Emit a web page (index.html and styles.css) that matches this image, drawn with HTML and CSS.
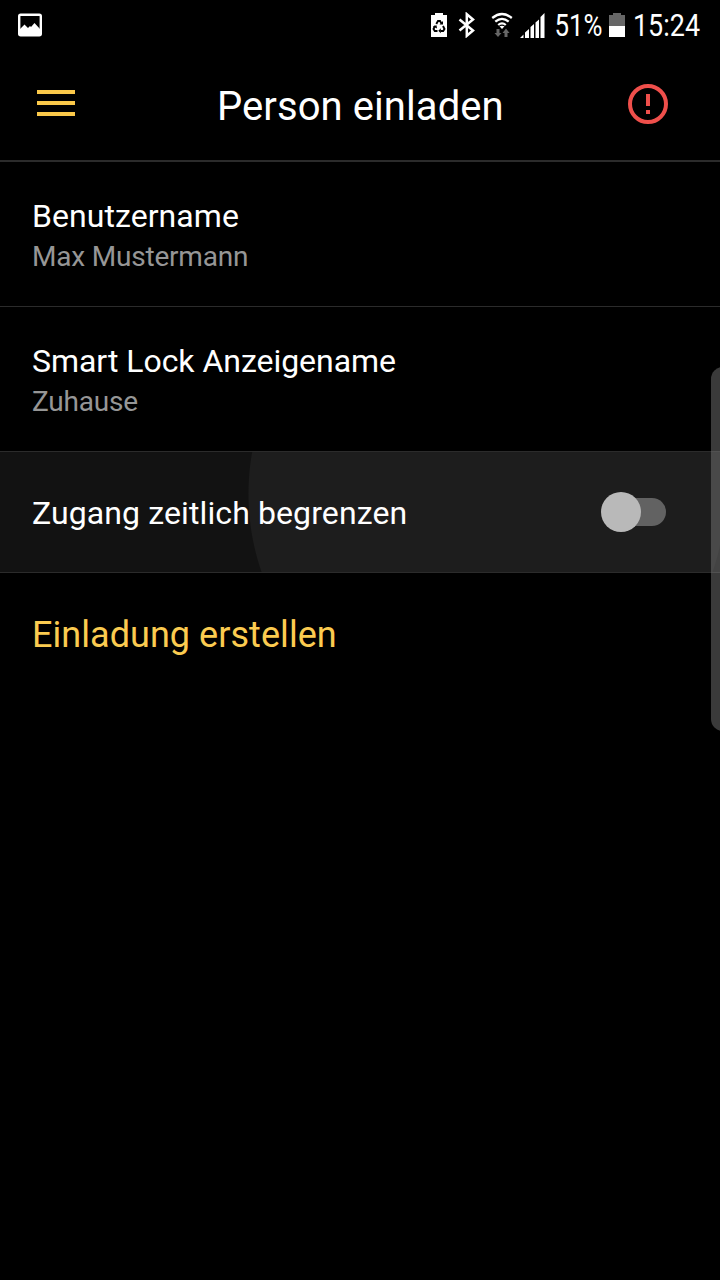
FILE: index.html
```html
<!DOCTYPE html>
<html lang="de">
<head>
    <meta charset="UTF-8">
    <meta name="viewport" content="width=device-width, initial-scale=1.0">
    <title>Person einladen</title>
    <link rel="stylesheet" href="styles.css">
</head>
<body>

    <div class="statusbar">
        <svg class="icon-picture" width="24" height="24" viewBox="0 0 24 24">
            <rect x="1.2" y="1.7" width="21.6" height="20.6" rx="1.5" fill="none" stroke="#fff" stroke-width="2.4"/>
            <path d="M2 16l4.500-4.500L10 15l2-2 1 1L16.500 10l5.500 6v6H2z" fill="#fff"/>
        </svg>
        <div class="status-right">
            <svg class="icon-saver" width="16" height="24" viewBox="0 0 16 24">
                <path d="M4 0h8v2h4v22H0V2h4z" fill="#fff"/>
                <path d="M5.300 11L7 8h2l1.500 2.500M12 13l1.500 3-1.300 2H9.500M6.500 18H3.800l-1.300-2L4 13" fill="none" stroke="#000" stroke-width="1.900"/>
                <path d="M8.500 11.500h3.500V8zM9.800 15.200v5L7.300 17.800zM1.800 13.300l3.700-1 .5 3.200z" fill="#000"/>
            </svg>
            <svg class="icon-bluetooth" width="17" height="26" viewBox="0 0 17 26">
                <path d="M1.500 7.500L15 18.500 8.800 23.800V2.200L15 7.500 1.500 18.500" fill="none" stroke="#fff" stroke-width="2.500"/>
            </svg>
            <svg class="icon-wifi" width="22" height="26" viewBox="0 0 22 26">
                <g fill="none" stroke="#fff" stroke-width="2.300">
                    <path d="M1.200 6Q11-2 20.800 6"/>
                    <path d="M4.300 9.700Q11 4 17.700 9.700"/>
                    <path d="M7.200 13Q11 9.700 14.800 13"/>
                </g>
                <path d="M8.500 14.300Q11 13 13.500 14.300L11 17z" fill="#fff"/>
                <path d="M5.500 17h3v4h2L7 25l-3.500-4h2z" fill="#666"/>
                <path d="M13.500 25h3v-4h2L15 16.500 11.500 21h2z" fill="#666"/>
            </svg>
            <svg class="icon-signal" width="25" height="25" viewBox="0 0 25 25">
                <path d="M0 25l3.500-3.500V25zM5 25v-5.500L9 16v9zM10.500 25V14l3.500-3v14zM15.500 25V9.500l3.500-3V25zM20.500 25V4l4-4v25z" fill="#fff"/>
            </svg>
            <svg class="status-text" width="47" height="30">
                <text x="-0.500" y="25" textLength="48" lengthAdjust="spacingAndGlyphs">51%</text>
            </svg>
            <svg class="icon-battery" width="16" height="24" viewBox="0 0 16 24">
                <path d="M4 0h8v2h4v11H0V2h4z" fill="#666"/>
                <path d="M0 13h16v11H0z" fill="#fff"/>
            </svg>
            <svg class="status-text" width="67" height="30">
                <text x="0" y="25" textLength="67" lengthAdjust="spacingAndGlyphs">15:24</text>
            </svg>
        </div>
    </div>

    <header class="header">
        <svg width="38" height="26" viewBox="0 0 38 26">
            <path d="M0 0h38v4H0zM0 11h38v4H0zM0 22h38v4H0z" fill="#fbc94a"/>
        </svg>
        <h1>Person einladen</h1>
        <svg width="40" height="40" viewBox="0 0 40 40">
            <circle cx="20" cy="20" r="18" fill="none" stroke="#ef4f4b" stroke-width="4"/>
            <path d="M18 10h4v12h-4zM18 26h4v4h-4z" fill="#ef4f4b"/>
        </svg>
    </header>

    <main>
        <div class="row">
            <div class="label label-user">Benutzername</div>
            <div class="value">Max Mustermann</div>
        </div>
        <div class="row">
            <div class="label label-lock">Smart Lock Anzeigename</div>
            <div class="value">Zuhause</div>
        </div>
        <div class="row row-switch">
            <div class="label label-limit">Zugang zeitlich begrenzen</div>
            <div class="switch"><span class="thumb"></span></div>
        </div>
        <a class="action">Einladung erstellen</a>
    </main>

    <div class="edge-handle"></div>

</body>
</html>
```

FILE: styles.css
```css
* {
    box-sizing: border-box;
}
body {
    position: relative;
    margin: 0;
    height: 1280px;
    overflow: hidden;
    background-color: #000;
    color: #fff;
    font-family: Roboto, sans-serif;
}
svg {
    display: block;
    flex-shrink: 0;
}
.statusbar {
    display: flex;
    justify-content: space-between;
    height: 50px;
    padding: 0 20px 0 18px;
}
.icon-picture {
    margin-top: 13px;
}
.status-right {
    display: flex;
    align-items: flex-start;
}
.icon-saver {
    margin: 13px 11px 0 0;
}
.icon-bluetooth {
    margin: 12px 16px 0 0;
}
.icon-wifi {
    margin: 12px 7px 0 0;
}
.icon-signal {
    margin: 13px 10px 0 0;
}
.icon-battery {
    margin: 13px 8px 0 7px;
}
.status-text {
    margin-top: 11px;
    overflow: visible;
    font-size: 30.5px;
    fill: #fff;
}
.header {
    display: grid;
    grid-template-columns: 38px 1fr 40px;
    height: 112px;
    padding: 34px 52px 0 37px;
    border-bottom: 2px solid #2b2b2b;
}
.header svg:first-child {
    margin-top: 6px;
}
h1 {
    margin: 0;
    padding: 1px 0 0 142px;
    font-size: 40px;
    font-weight: 400;
    line-height: 44px;
    letter-spacing: 0.08px;
    white-space: nowrap;
}
.row {
    height: 145px;
    padding: 35px 32px 0;
    border-bottom: 1px solid #2b2b2b;
}
.label {
    font-size: 32px;
    line-height: 38px;
    white-space: nowrap;
}
.label-user {
    letter-spacing: 0.06px;
}
.label-lock {
    letter-spacing: -0.04px;
}
.label-limit {
    padding-top: 2px;
    letter-spacing: 0.11px;
}
.value {
    margin-top: 3px;
    color: #969696;
    font-size: 28px;
    line-height: 38px;
    letter-spacing: -0.2px;
}
/* pressed state: tinted row with the touch ripple */
.row-switch {
    display: flex;
    align-items: center;
    justify-content: space-between;
    height: 121px;
    padding: 0 54px 0 32px;
    background: radial-gradient(circle at 487px 42px, #1d1d1d 238px, #121212 239px);
}
.switch {
    display: flex;
    align-items: center;
    width: 56px;
    height: 28px;
    border-radius: 14px;
    background-color: #626262;
}
.thumb {
    flex-shrink: 0;
    width: 40px;
    height: 40px;
    margin-left: -9px;
    border-radius: 50%;
    background-color: #b9b9b9;
}
.action {
    display: block;
    padding: 40px 32px;
    color: #fbcb50;
    font-size: 36px;
    line-height: 44px;
    letter-spacing: 0.05px;
}
.edge-handle {
    position: absolute;
    top: 367px;
    right: -15px;
    width: 24px;
    height: 364px;
    border-radius: 12px;
    background-color: rgba(128, 128, 128, 0.45);
}
```
